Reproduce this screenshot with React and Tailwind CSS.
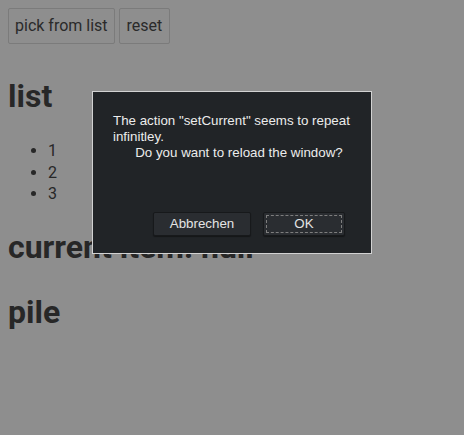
export default function App() {
  return (
    <div className="relative min-h-[435px] bg-[#8e8e8e] p-2 font-['Roboto',sans-serif] text-[#272727]">
      <div className="flex gap-1">
        <button className="h-9 px-[6px] border border-[#7b7b7b] rounded-[2px] text-base leading-5 bg-[#8e8e8e] text-[#2a2a2a]">
          pick from list
        </button>
        <button className="h-9 px-[7px] border border-[#7b7b7b] rounded-[2px] text-base leading-5 bg-[#8e8e8e] text-[#2a2a2a]">
          reset
        </button>
      </div>
      <h1 className="mt-[34px] text-[32px] font-bold leading-[37px]">list</h1>
      <ul className="mt-[25px] list-disc pl-10 text-base leading-[21.5px]">
        <li>1</li>
        <li>2</li>
        <li>3</li>
      </ul>
      <h1 className="mt-[24px] text-[32px] font-bold leading-[37px]">current item: null</h1>
      <h1 className="mt-[28px] text-[32px] font-bold leading-[37px]">pile</h1>

      <div className="absolute left-[92px] top-[91px] w-[280px] h-[163px] border border-[#d2d2d2] bg-[#212427] font-['Liberation_Sans',Arial,sans-serif] text-[13.333px] text-[#ececec]">
        <div className="pl-5 pt-[21px] w-[270px] leading-4 whitespace-pre-wrap">
          {'The action "setCurrent" seems to repeat infinitley.\n      Do you want to reload the window?'}
        </div>
        <div className="absolute right-[26px] bottom-[17px] flex gap-3">
          <button className="w-[98px] h-6 rounded-[2px] bg-[#2a2d31] border border-[#17191b] shadow-[0_1px_1px_rgba(0,0,0,0.4)] text-[#e4e4e4] leading-4">
            Abbrechen
          </button>
          <button className="w-[82px] h-6 rounded-[2px] bg-[#2a2d31] border border-[#17191b] shadow-[0_1px_1px_rgba(0,0,0,0.4)] text-[#e4e4e4] leading-4 p-[2px]">
            <span className="flex h-full w-full items-center justify-center border border-dashed border-[#7e7e7e]">OK</span>
          </button>
        </div>
      </div>
    </div>
  );
}
